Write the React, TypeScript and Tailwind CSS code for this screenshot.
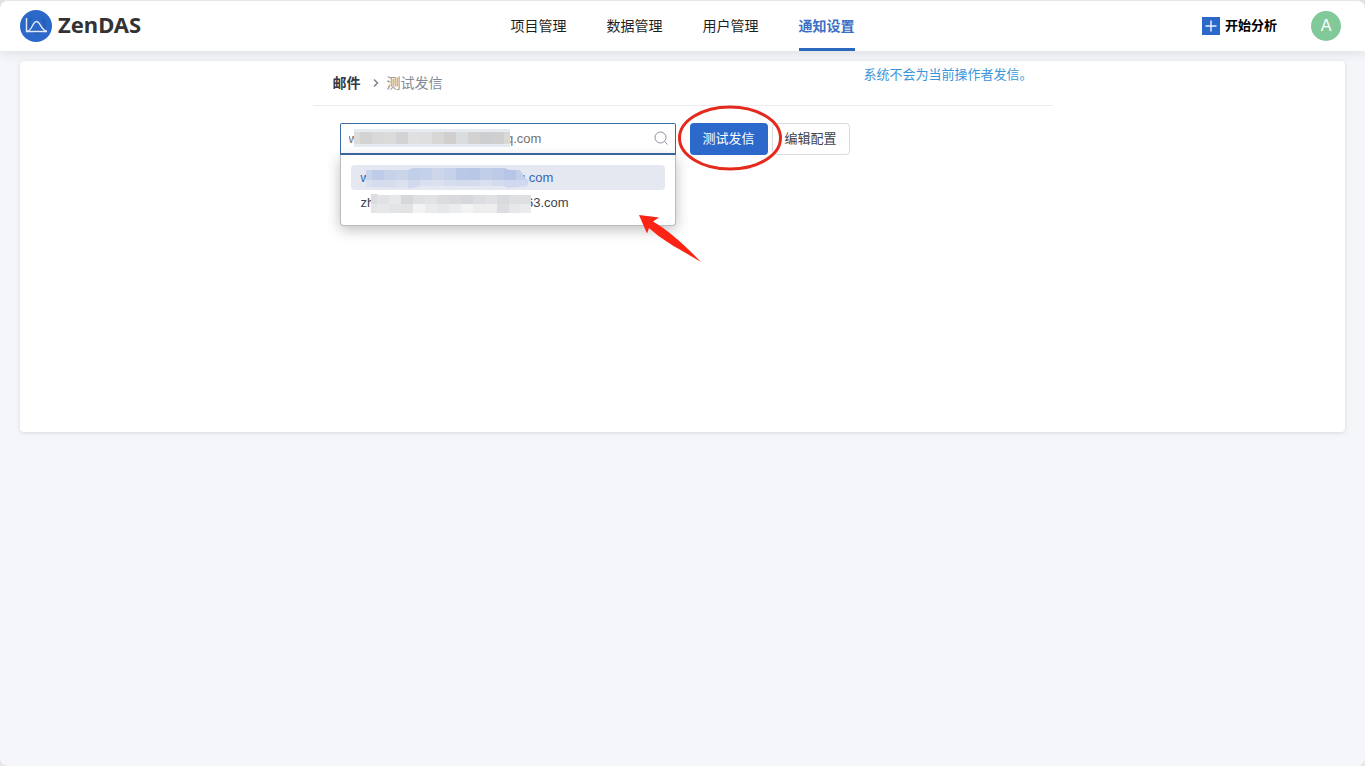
import { useState } from "react";
import clsx from "clsx";

const navItems = ["项目管理", "数据管理", "用户管理", "通知设置"];

// the middle part of each address is masked, so only its ends are kept
const mask = (start: string, end: string, gap: number) =>
  start + "\u00a0".repeat(gap) + end;

const accounts = [mask("w", "q.com", 41), mask("zh", "63.com", 42)];

type MosaicProps = {
  className: string;
  width: number;
  height: number;
  rows: { y: number; h: number; fills: string[] }[];
  clip?: string;
  id: string;
};

function Mosaic({ className, width, height, rows, clip, id }: MosaicProps) {
  return (
    <svg
      className={clsx("pointer-events-none absolute", className)}
      width={width}
      height={height}
      shapeRendering="crispEdges"
      aria-hidden="true"
    >
      {clip && (
        <clipPath id={id}>
          <polygon points={clip} />
        </clipPath>
      )}
      <g clipPath={clip ? `url(#${id})` : undefined}>
        {rows.map((row) =>
          row.fills.map((fill, i) => (
            <rect
              key={`${row.y}-${i}`}
              x={i === 0 ? 0 : i * 12 - 6}
              y={row.y}
              width={i === 0 ? 6 : 12}
              height={row.h}
              fill={fill}
            />
          ))
        )}
      </g>
    </svg>
  );
}

const inputFills = ["#dcdcdc", "#d3d3d2", "#d8d9d8", "#dbdbda", "#d2d3d5", "#e0e0e0", "#e0dfdf", "#d8d7d6", "#d0cfcd", "#d9dddd", "#d3d2d0", "#cdced0", "#cfcfcf", "#d8d9d6"];
const haloFills = inputFills.map(() => "#e6ebf3");

function Logo() {
  return (
    <a href="#" className="flex items-center gap-[6px]">
      <svg width="32" height="32" viewBox="0 0 32 32" fill="none" aria-hidden="true">
        <circle cx="16" cy="16" r="16" fill="#2c68c9" />
        <path d="M11 8c-4 6-1 15 8 15M22 9c5 4 3 12-4 13" stroke="#2560b5" strokeWidth="3" />
        <path d="M6.500 8v13.500h20.500" stroke="#dfe9fa" strokeWidth="1.400" />
        <path d="M7 21.200c5 0 5.500-9.700 9.500-9.700s4.500 9.200 10.500 9.700" stroke="#dfe9fa" strokeWidth="1.400" />
      </svg>
      <span className="pb-1 font-['Noto_Sans','Open_Sans',sans-serif] text-[22px] leading-7 font-bold text-[#333333]">
        ZenDAS
      </span>
    </a>
  );
}

function Header() {
  return (
    <header className="relative grid h-[51px] grid-cols-[1fr_auto_1fr] rounded-t-lg border-t border-[#e6e6e8] bg-white px-5 shadow-[0_2px_12px_rgba(0,0,0,0.1)]">
      <Logo />
      <nav className="flex gap-10 text-sm text-[#1f1f1f]">
        {navItems.map((item) => (
          <a
            key={item}
            href="#"
            className={clsx(
              "flex items-center border-y-3 border-transparent",
              item === "通知设置" && "border-b-[#2c68c0] font-bold text-[#3a6fc4]"
            )}
          >
            {item}
          </a>
        ))}
      </nav>
      <div className="flex items-center justify-end gap-[34px] pr-1">
        <button type="button" className="flex items-center gap-[5px] text-[13px] font-bold text-black">
          <svg width="18" height="18" viewBox="0 0 18 18" aria-hidden="true">
            <rect width="18" height="18" fill="#2c68c9" />
            <path d="M9 3.500v11M3.500 9h11" stroke="#e6effc" strokeWidth="1.500" />
          </svg>
          开始分析
        </button>
        <button type="button" className="size-[30px] rounded-full bg-[#82c99a] text-base text-white">
          A
        </button>
      </div>
    </header>
  );
}

function AccountSelect() {
  const [value, setValue] = useState(accounts[0]);

  return (
    <div className="relative w-[336px]">
      <input
        type="text"
        aria-label="邮箱"
        value={value}
        onChange={(e) => setValue(e.target.value)}
        className="block h-8 w-full rounded-t-xs border border-b-2 border-[#3b6ba5] bg-white pr-8 pl-2 text-[13px] text-[#73726f] outline-none"
      />
      <Mosaic
        id="mosaic-input"
        className="top-[6px] left-[14px]"
        width={156}
        height={18}
        rows={[
          { y: 0, h: 18, fills: haloFills },
          { y: 3, h: 12, fills: inputFills },
        ]}
      />
      <svg className="absolute top-2 right-2" width="14" height="14" viewBox="0 0 14 14" fill="none" stroke="#8a90a0" aria-hidden="true">
        <circle cx="6.500" cy="6.500" r="5.500" />
        <path d="M10.500 10.500l3 3" />
      </svg>

      <ul
        role="listbox"
        aria-label="邮箱"
        className="absolute top-full left-0 w-full rounded-b border border-t-0 border-[#b9bbc0] bg-white p-[10px] text-[13px] leading-[25px] text-[#40434c] shadow-[0_4px_14px_rgba(0,0,0,0.25)]"
      >
        <li role="option" aria-selected="true" className="relative rounded bg-[#e5e8f0] px-[10px] text-[#3567b5]">
          {accounts[0]}
          <Mosaic
            id="mosaic-first"
            className="top-[3px] left-[15px]"
            width={163}
            height={20}
            clip="0,2 42,2 47,0 138,0 144,2 154,2 159,10 163,13 161,18 142,20 138,18 54,18 46,20 0,19"
            rows={[
              { y: 0, h: 12, fills: ["#c9d3ea", "#bfcce9", "#c6d1ea", "#cbd5ea", "#c2cfe9", "#c5d0ea", "#ccd5ea", "#c6d1ea", "#bac8e7", "#b9c7e7", "#c2cdea", "#bdcae8", "#b7c5e6", "#c4cfeb"] },
              { y: 12, h: 8, fills: ["#d8dfee", "#d4dcee", "#d6dded", "#dbe1ef", "#d0d9ee", "#d9e0ef", "#dbe1ef", "#d6ddee", "#d3dbed", "#d5dcee", "#d9e0ef", "#d3dbee", "#cfd9ee", "#d0d9ef"] },
            ]}
          />
        </li>
        <li role="option" aria-selected="false" className="relative rounded px-[10px]">
          {accounts[1]}
          <Mosaic
            id="mosaic-second"
            className="top-[4px] left-[20px]"
            width={160}
            height={19}
            clip="0,0 7,0 7,1 160,1 160,19 0,19"
            rows={[
              { y: 0, h: 10, fills: ["#dddddf", "#e1e2e3", "#e7e8e9", "#d6d7d9", "#dfe0e2", "#e2e3e5", "#dcdcdf", "#d9dadd", "#d6d7da", "#dcdde0", "#e0e1e3", "#d9dadd", "#dedfe1", "#dfdfe1"] },
              { y: 10, h: 9, fills: ["#e4e5e7", "#e7e8e9", "#e3e4e6", "#e2e3e4", "#f3f3f4", "#eaebec", "#e6e7e9", "#ebeced", "#f2f3f4", "#ededee", "#eeeeef", "#dcdde1", "#e7e8ea", "#ebebed"] },
            ]}
          />
        </li>
      </ul>

      <svg className="pointer-events-none absolute top-[91px] left-[298px]" width="64" height="50" viewBox="0 0 64 50" aria-hidden="true">
        <path d="M1 1l20 2.500-6 4c16 9 32 24 48 40.500C45 37 26 28 11 14l-2 5.500z" fill="#fb2313" />
      </svg>
    </div>
  );
}

export default function App() {
  return (
    <div className="min-h-screen bg-[#e6e6e8] font-['Liberation_Sans','Noto_Sans_CJK_SC',sans-serif]">
      <div className="min-h-screen rounded-lg bg-[#f5f6fa]">
        <Header />
        <main className="px-5 pt-[10px]">
          <section className="min-h-[371px] rounded bg-white shadow-[0_1px_4px_rgba(0,0,0,0.12)]">
            <div className="mx-auto max-w-[740px]">
              <div className="flex h-[45px] items-center justify-between border-b border-[#ebecef] px-5">
                <div className="flex items-center text-sm text-[#858a96]">
                  <span className="font-bold text-[#363943]">邮件</span>
                  <svg className="mr-2 ml-3" width="6" height="10" viewBox="0 0 6 10" fill="none" stroke="#7d828c" strokeWidth="1.500" aria-hidden="true">
                    <path d="M1 1.500l3.500 3.500L1 8.500" />
                  </svg>
                  <span>测试发信</span>
                </div>
                <p className="self-start pt-1 text-[13px] leading-5 text-[#3a96da]">系统不会为当前操作者发信。</p>
              </div>

              <div className="flex pt-[17px] pl-[27px]">
                <AccountSelect />
                <div className="relative ml-[14px]">
                  <button type="button" className="h-8 w-[78px] rounded bg-[#2c69cb] text-[13px] text-white">
                    测试发信
                  </button>
                  <svg className="pointer-events-none absolute -top-[18px] -left-3 z-10" width="106" height="66" viewBox="0 0 106 66" fill="none" aria-hidden="true">
                    <ellipse cx="52" cy="33" rx="50.500" ry="31" stroke="#e42a1d" strokeWidth="3" />
                  </svg>
                </div>
                <button type="button" className="ml-1 h-8 w-[78px] rounded border border-[#d9dbe1] bg-white text-[13px] text-[#40434c]">
                  编辑配置
                </button>
              </div>
            </div>
          </section>
        </main>
      </div>
    </div>
  );
}
